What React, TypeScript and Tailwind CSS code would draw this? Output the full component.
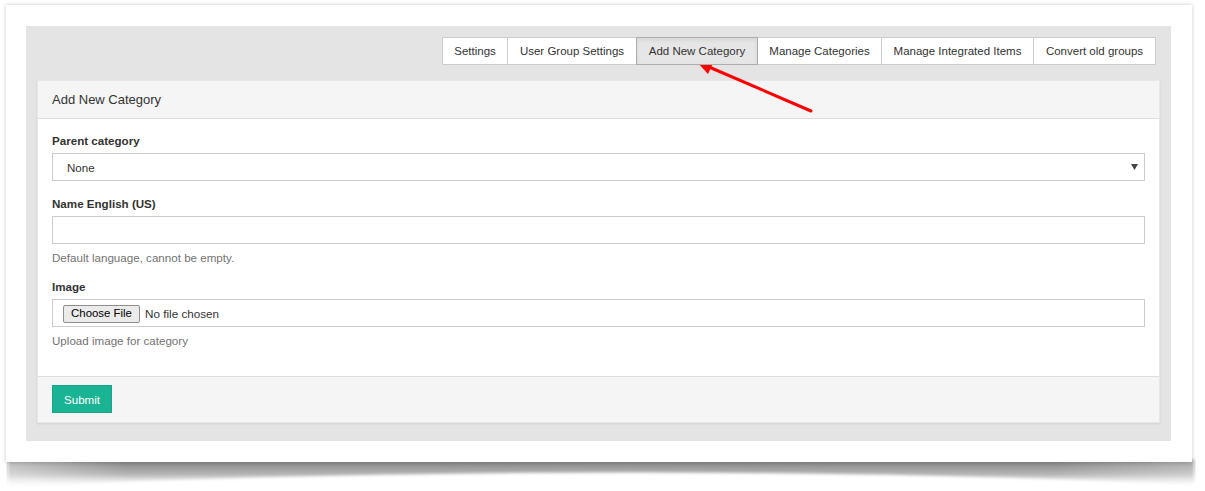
import React from 'react';

const tabs = [
  { label: 'Settings', width: 'w-[66px]' },
  { label: 'User Group Settings', width: 'w-[130px]' },
  { label: 'Add New Category', width: 'w-[122px]', active: true },
  { label: 'Manage Categories', width: 'w-[125px]' },
  { label: 'Manage Integrated Items', width: 'w-[153px]' },
  { label: 'Convert old groups', width: 'w-[123px]' },
];

function Tabs() {
  return (
    <div className="flex justify-end pr-[4px]">
      {tabs.map((tab, i) => (
        <div
          key={tab.label}
          className={`relative flex h-[28px] ${tab.width} items-center justify-center border pt-[2px] text-[11.5px] text-[#333333] ${
            i > 0 ? '-ml-px' : ''
          } ${
            tab.active
              ? 'z-10 border-[#adadad] bg-[#e6e6e6] shadow-[inset_0_2px_4px_rgba(0,0,0,0.08)]'
              : 'border-[#cccccc] bg-white'
          }`}
        >
          {tab.label}
        </div>
      ))}
    </div>
  );
}

function Label({ children }: { children: React.ReactNode }) {
  return <div className="mb-[5px] h-[17px] pt-px text-[11.6px] font-bold leading-[17px] text-[#333333]">{children}</div>;
}

function Help({ children }: { children: React.ReactNode }) {
  return <div className="mt-[5px] h-[17px] text-[11.6px] leading-[17px] text-[#737373]">{children}</div>;
}

function CategoryForm() {
  return (
    <div className="mt-[15px] border border-[#e7e7e7] bg-white shadow-[0_1px_2px_rgba(0,0,0,0.08)]">
      {/* Header */}
      <div className="flex h-[38px] items-center border-b border-[#dddddd] bg-[#f5f5f5] px-[14px] text-[13px] text-[#333333]">
        Add New Category
      </div>

      {/* Body */}
      <div className="px-[14px] pt-[12px] pb-[27px]">
        <Label>Parent category</Label>
        <div className="flex h-[28px] items-center justify-between border border-[#cccccc] bg-white pl-[14px] pr-[6px] text-[11.6px] text-[#333333]">
          <span className="pt-[2px]">None</span>
          <svg width="7" height="6" viewBox="0 0 7 6">
            <path d="M0 0 H7 L3.5 6 Z" fill="#444444" />
          </svg>
        </div>

        <div className="mt-[13px]">
          <Label>Name English (US)</Label>
          <div className="h-[28px] border border-[#cccccc] bg-white" />
          <Help>Default language, cannot be empty.</Help>
        </div>

        <div className="mt-[12px]">
          <div className="mb-[4px] h-[17px] text-[11.6px] font-bold leading-[17px] text-[#333333]">Image</div>
          <div className="flex h-[28px] items-center border border-[#cccccc] bg-white pl-[10px] pt-[2px]">
            <div className="flex h-[18px] w-[77px] items-center justify-center rounded-[2px] border border-[#8f8f8f] bg-[#ebebeb] text-[11.4px] text-black">
              Choose File
            </div>
            <span className="ml-[5px] text-[11.7px] text-[#333333]">No file chosen</span>
          </div>
          <Help>Upload image for category</Help>
        </div>
      </div>

      {/* Footer */}
      <div className="border-t border-[#dddddd] bg-[#f5f5f5] px-[14px] pt-[8px] pb-[9px]">
        <div className="flex h-[28px] w-[60px] items-center justify-center border border-[#18a689] bg-[#1ab394] pt-[2px] text-[11.6px] text-white">
          Submit
        </div>
      </div>
    </div>
  );
}

export default function App() {
  return (
    <div className="relative h-[491px] w-[1205px] overflow-hidden bg-white font-['Liberation_Sans',Arial,sans-serif]">
      {/* curled page shadow */}
      <svg className="absolute left-[6px] top-[456px]" width="1190" height="34" viewBox="0 0 1190 34">
        <defs>
          <linearGradient id="curl" x1="0" y1="0" x2="0" y2="1">
            <stop offset="0" stopColor="#7c7c7c" stopOpacity="1" />
            <stop offset="0.55" stopColor="#a8a8a8" stopOpacity="0.85" />
            <stop offset="1" stopColor="#cfcfcf" stopOpacity="0" />
          </linearGradient>
          <linearGradient id="curlSide" x1="0" y1="0" x2="1" y2="0">
            <stop offset="0" stopColor="#ffffff" stopOpacity="0.45" />
            <stop offset="0.1" stopColor="#ffffff" stopOpacity="0" />
            <stop offset="0.88" stopColor="#ffffff" stopOpacity="0" />
            <stop offset="1" stopColor="#ffffff" stopOpacity="0.3" />
          </linearGradient>
          <filter id="blur">
            <feGaussianBlur stdDeviation="1.4" />
          </filter>
        </defs>
        <path d="M2 4 L1188 4 L1188 28 Q600 4 2 30 Z" fill="url(#curl)" filter="url(#blur)" />
        <path d="M2 4 L1188 4 L1188 28 Q600 4 2 30 Z" fill="url(#curlSide)" />
      </svg>

      <div className="relative pl-[6px] pt-[5px]">
        <div className="h-[457px] w-[1186px] bg-white pl-[20px] pt-[21px] shadow-[0_0_4px_rgba(0,0,0,0.22)]">
          <div className="h-[415px] w-[1145px] bg-[#e4e4e4] px-[11px] pt-[11px]">
            <Tabs />
            <CategoryForm />
          </div>
        </div>
      </div>

      {/* red annotation arrow */}
      <svg className="pointer-events-none absolute left-0 top-0" width="1205" height="491">
        <line x1="811" y1="111" x2="709" y2="67" stroke="#ff0000" strokeWidth="3" strokeLinecap="round" />
        <polygon points="696,61 714,61 708,74" fill="#ff0000" />
      </svg>
    </div>
  );
}
